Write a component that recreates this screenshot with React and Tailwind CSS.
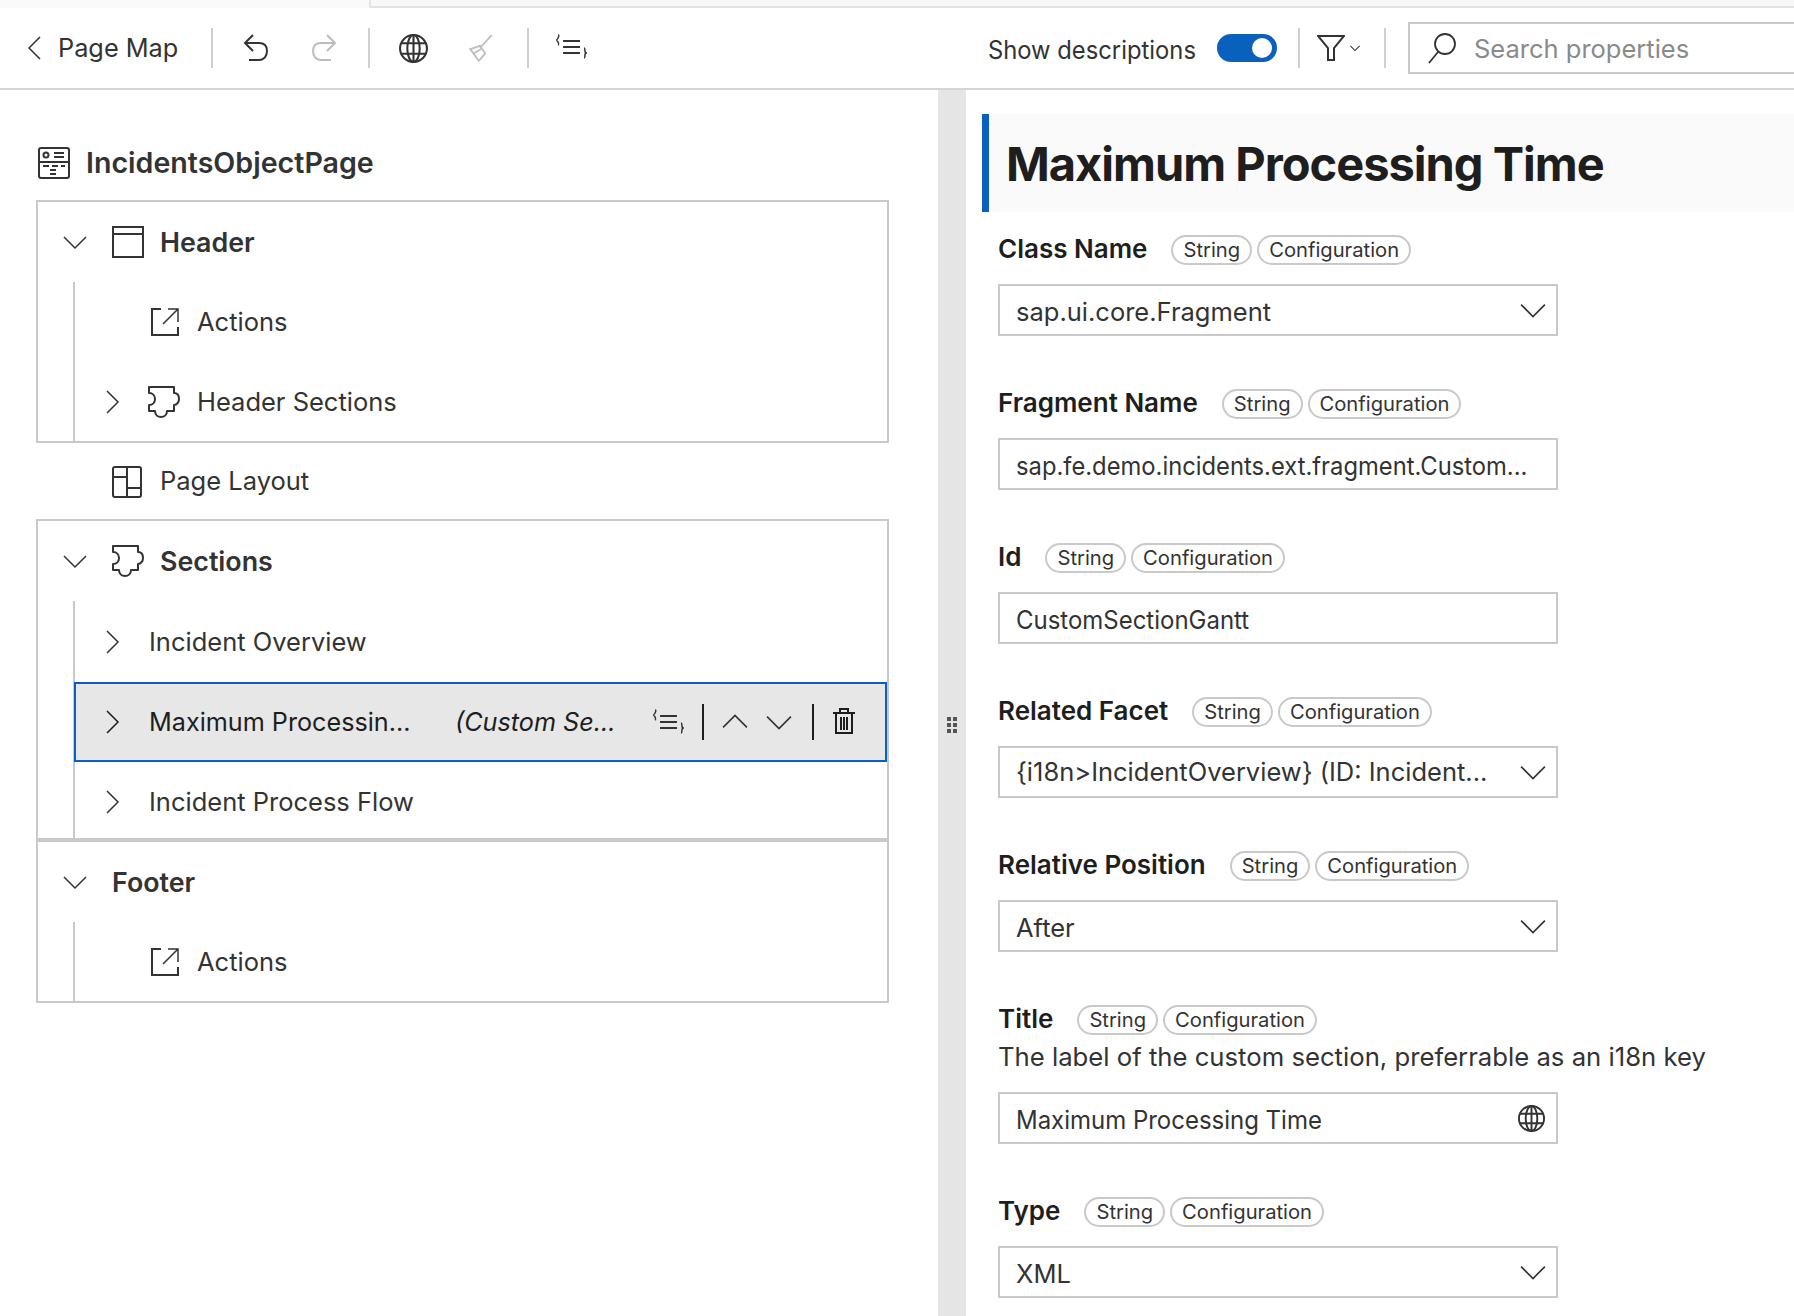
import React from "react";

const Chev = ({ d = "down", size = 24, w = 1.5, color = "#333" }) => {
  const p = { down: "M1 7l11 11 11-11", right: "M7 1l11 11L7 23", up: "M1 17L12 6l11 11", left: "M17 1L6 12l11 11" }[d];
  return (
    <svg width={size} height={size} viewBox="0 0 24 24" fill="none" stroke={color} strokeWidth={w} className="shrink-0">
      <path d={p} />
    </svg>
  );
};

const Puzzle = () => (
  <svg width="34" height="34" viewBox="0 0 34 34" fill="none" stroke="#333" strokeWidth="2" strokeLinejoin="round" className="shrink-0 block">
    <path d="M2 2H27V8C31 8 32 11 32 14C32 17 30 20 27 20V26H20C20 30 17 32 14 32C11 32 8 30 8 26H2V20C6 20 8 17 8 14C8 11 6 8 2 8Z" />
  </svg>
);

const Ext = () => (
  <svg width="30" height="30" viewBox="0 0 30 30" fill="none" stroke="#333" strokeWidth="2" className="shrink-0 block">
    <path d="M11 2H2v26h26v-8" />
    <path d="M18 2h10v13M28 2L13 17" strokeWidth="1.5" />
  </svg>
);

const Globe = ({ size = 30 }) => (
  <svg width={size} height={size} viewBox="0 0 30 30" fill="none" stroke="#333" strokeWidth="2" className="shrink-0">
    <circle cx="15" cy="15" r="13" />
    <ellipse cx="15" cy="15" rx="6" ry="13" />
    <path d="M15 2v26M3 10h24M3 20h24" />
  </svg>
);

const Outline = ({ size = 34 }) => (
  <svg width={size} height={size * 0.82} viewBox="0 0 34 28" fill="none" stroke="#333" strokeWidth="2" className="shrink-0">
    <path d="M2 1c1 0 1 1 0 3C1 6 1 6 0 6c1 0 1 1 2 2 1 2 0 3 1 3" strokeWidth="1.5" transform="translate(1 1)" />
    <path d="M8 8h17M8 14h17M8 20h17" />
    <path d="M29 15c1 0 1 2 1 3s1 2 2 2c-1 0-2 1-2 2s0 3-1 3" strokeWidth="1.5" />
  </svg>
);

const Pill = ({ children }) => (
  <span className="h-[30px] flex items-center px-[10px] rounded-[15px] border-2 border-[#c9c9c9] text-[20.2px] text-[#333] leading-none">
    {children}
  </span>
);

const Field = ({ label, value, select, globe, desc, narrow, narrower, flat }) => (
  <div className="mb-[52px]">
    <div className="flex items-center gap-[5px] h-[32px]">
      <span className="text-[26px] font-semibold text-[#1e1e1e] mr-[19px] pb-[3px]">{label}</span>
      <Pill>String</Pill>
      <Pill>Configuration</Pill>
    </div>
    {desc && <div className="text-[25.7px] text-[#333] leading-[32px] mt-[5px] whitespace-nowrap">{desc}</div>}
    <div className={`w-[560px] h-[52px] border-2 border-[#c9c9c9] flex items-center justify-between pl-[16px] pr-[10px] bg-white ${desc ? "mt-[19px]" : "mt-[18px]"}`}>
      <span className={`text-[25.5px] text-[#333] whitespace-nowrap ${flat ? "" : "pt-[4px]"} ${narrow ? "inline-block scale-x-[0.94] origin-left" : ""} ${narrower ? "inline-block scale-x-[0.932] origin-left" : ""}`}>{value}</span>
      {select && <Chev d="down" size={26} />}
      {globe && <Globe size={29} />}
    </div>
  </div>
);

const Row = ({ indent, chev, icon, bold, children }) => (
  <div className="h-[80px] flex items-center">
    <div className="w-[37px] shrink-0 flex justify-center" style={{ marginLeft: indent }}>
      {chev && <Chev d={chev} />}
    </div>
    {icon}
    <span className={`whitespace-nowrap text-[#333] ${bold ? "text-[26.8px] font-semibold" : "text-[25.5px]"}`}>{children}</span>
  </div>
);

export default function App() {
  return (
    <div className="w-[1794px] h-[1316px] overflow-hidden bg-white flex flex-col font-['Inter',sans-serif] text-[#333]">
      {/* top strip */}
      <div className="h-[8px] flex shrink-0">
        <div className="w-[371px] bg-[#fafafa] border-r-2 border-[#e5e5e5]" />
        <div className="flex-1 bg-[#f7f7f7] border-b-2 border-[#e2e2e2]" />
      </div>

      {/* toolbar */}
      <div className="h-[82px] shrink-0 border-b-2 border-[#d4d4d4] flex items-center relative">
        <div className="flex items-center w-[211px] pl-[23px]">
          <Chev d="left" size={24} />
          <span className="text-[25.3px] ml-[11px] whitespace-nowrap">Page Map</span>
        </div>
        <div className="w-[2px] h-[40px] bg-[#d0d0d0]" />
        <div className="w-[155px] flex items-center justify-between pl-[30px] pr-[31px]">
          <svg width="26" height="28" viewBox="0 0 26 28" fill="none" stroke="#333" strokeWidth="2"><path d="M10 1L2 9l8 8M2 9h14c5 0 8 3 8 8s-3 9-8 9H6" /></svg>
          <svg width="26" height="28" viewBox="0 0 26 28" fill="none" stroke="#bdbdbd" strokeWidth="2"><path d="M16 1l8 8-8 8M24 9H10c-5 0-8 3-8 8s3 9 8 9h10" /></svg>
        </div>
        <div className="w-[2px] h-[40px] bg-[#d0d0d0]" />
        <div className="w-[157px] flex items-center justify-between pl-[28px] pr-[33px]">
          <Globe size={31} />
          <svg width="26" height="28" viewBox="0 0 24 26" fill="none" stroke="#bdbdbd" strokeWidth="1.6"><path d="M22 1L11 13M2 14l9-3 5 7-6 7-8-11zM5 18l7-4" /></svg>
        </div>
        <div className="w-[2px] h-[40px] bg-[#d0d0d0]" />
        <div className="ml-[26px] mt-[-2px]"><Outline /></div>

        <div className="ml-auto flex items-center">
          <span className="text-[25.5px] whitespace-nowrap mr-[21px] pt-[4px] inline-block scale-x-[0.933] origin-right">Show descriptions</span>
          <div className="w-[60px] h-[28px] rounded-[14px] bg-[#0a60bd] flex items-center justify-end pr-[5px] mr-[21px]">
            <div className="w-[20px] h-[20px] rounded-full bg-white" />
          </div>
          <div className="w-[2px] h-[40px] bg-[#d0d0d0]" />
          <div className="w-[84px] flex items-center pl-[17px]">
            <svg width="28" height="26" viewBox="0 0 28 26" fill="none" stroke="#333" strokeWidth="2"><path d="M1 1h26L17 13v12h-6V13z" /></svg>
            <span className="ml-[5px]"><Chev d="down" size={10} w={2.5} /></span>
          </div>
          <div className="w-[2px] h-[40px] bg-[#d0d0d0]" />
          <div className="ml-[22px] w-[386px] h-[52px] border-2 border-r-0 border-[#c9c9c9] flex items-center pl-[17px]">
            <svg width="30" height="32" viewBox="0 0 30 32" fill="none" stroke="#333" strokeWidth="1.8"><circle cx="18" cy="12" r="10" /><path d="M11 20L2 31" /></svg>
            <span className="text-[25.5px] text-[#8a8a8a] ml-[17px] pt-[2px] whitespace-nowrap">Search properties</span>
          </div>
        </div>
      </div>

      <div className="flex-1 flex min-h-0">
        {/* left panel */}
        <div className="w-[938px] shrink-0 pl-[36px] pr-[49px] pt-[44px]">
          <div className="flex items-center h-[58px] mb-[8px] pl-[2px]">
            <svg width="32" height="32" viewBox="0 0 32 32" fill="none" stroke="#333" strokeWidth="2" className="shrink-0">
              <rect x="1" y="1" width="30" height="30" rx="2" />
              <path d="M1 15h30M16 6h10M16 10h10M5 19h6M14 19h6M23 19h4M12 23h6M12 27h6" />
              <circle cx="8" cy="8" r="2.5" />
            </svg>
            <span className="text-[28.6px] font-semibold ml-[16px] whitespace-nowrap">IncidentsObjectPage</span>
          </div>

          <div className="border-2 border-[#c9c9c9] h-[243px]">
            <Row chev="down" indent={18} icon={<svg width="32" height="32" viewBox="0 0 32 32" fill="none" stroke="#333" strokeWidth="2" className="shrink-0 ml-[19px] mr-[16px]"><rect x="1" y="1" width="30" height="30" /><path d="M1 8h30" /></svg>} bold>Header</Row>
            <div className="border-l-2 border-[#c9c9c9] ml-[35px] h-[161px]">
              <Row indent={18} icon={<span className="ml-[20px] mr-[17px]"><Ext /></span>}>Actions</Row>
              <Row indent={18} chev="right" icon={<span className="ml-[17px] mr-[16px]"><Puzzle /></span>}>Header Sections</Row>
            </div>
          </div>

          <div className="h-[76px] flex items-center pl-[76px] pt-[1px]">
            <svg width="30" height="32" viewBox="0 0 30 32" fill="none" stroke="#333" strokeWidth="2" className="shrink-0 mr-[18px]"><rect x="1" y="1" width="28" height="30" rx="2" /><path d="M15 1v30M1 11h14M15 22h14" /></svg>
            <span className="text-[25.5px] whitespace-nowrap">Page Layout</span>
          </div>

          <div className="border-2 border-[#c9c9c9] border-b-0 h-[321px]">
            <Row chev="down" indent={18} icon={<span className="ml-[18px] mr-[15px]"><Puzzle /></span>} bold>Sections</Row>
            <div className="ml-[35px] border-l-2 border-[#c9c9c9] h-[239px] relative pt-[1px]">
              <Row indent={18} chev="right" icon={<span className="ml-[19px]" />}>Incident Overview</Row>
              <div className="h-[80px] -ml-[1px] border-2 border-[#0a60bd] bg-[#e7e7e7] flex items-center text-[#1e1e1e] relative">
                <div className="w-[37px] ml-[17px] shrink-0 flex justify-center"><Chev d="right" color="#1e1e1e" /></div>
                <span className="text-[25.2px] ml-[19px] w-[306px] pt-[2px] whitespace-nowrap">Maximum Processin...</span>
                <span className="text-[25.2px] italic w-[197px] pt-[2px] whitespace-nowrap">(Custom Se...</span>
                <Outline size={34} />
                <div className="w-[2px] h-[36px] bg-[#1e1e1e] ml-[16px]" />
                <span className="ml-[18px]"><Chev d="up" size={26} /></span>
                <span className="ml-[18px]"><Chev d="down" size={26} /></span>
                <div className="w-[2px] h-[36px] bg-[#1e1e1e] ml-[20px]" />
                <svg width="22" height="28" viewBox="0 0 22 28" fill="none" stroke="#1e1e1e" strokeWidth="2" className="ml-[19px] mb-[2px]"><path d="M0 6h22M7 6V2h8v4M3 6v20h16V6M8 10v13M11 10v13M14 10v13" /></svg>
              </div>
              <Row indent={18} chev="right" icon={<span className="ml-[19px]" />}>Incident Process Flow</Row>
            </div>
          </div>

          <div className="border-2 border-t-4 border-[#c9c9c9] h-[165px] mt-[-2px]">
            <Row chev="down" indent={18} icon={<span className="ml-[19px]" />} bold>Footer</Row>
            <div className="border-l-2 border-[#c9c9c9] ml-[35px] h-[79px]">
              <Row indent={18} icon={<span className="ml-[20px] mr-[17px]"><Ext /></span>}>Actions</Row>
            </div>
          </div>
        </div>

        {/* splitter */}
        <div className="w-[28px] shrink-0 bg-[#e5e5e5] flex items-center justify-center">
          <svg width="12" height="18" viewBox="0 0 12 18" fill="#555" className="mt-[44px]">
            <rect x="1" y="1" width="4" height="4" /><rect x="7" y="1" width="4" height="4" />
            <rect x="1" y="7" width="4" height="4" /><rect x="7" y="7" width="4" height="4" />
            <rect x="1" y="13" width="4" height="4" /><rect x="7" y="13" width="4" height="4" />
          </svg>
        </div>

        {/* right panel */}
        <div className="flex-1 min-w-0 pt-[24px] pl-[16px]">
          <div className="h-[98px] bg-[#fafafa] border-l-[7px] border-[#0a60bd] flex items-center pl-[17px] pt-[2px] mb-[22px]">
            <span className="text-[47px] font-bold text-[#1e1e1e] whitespace-nowrap tracking-[-1px]">Maximum Processing Time</span>
          </div>
          <div className="pl-[16px]">
            <Field label="Class Name" value="sap.ui.core.Fragment" select />
            <Field label="Fragment Name" value="sap.fe.demo.incidents.ext.fragment.Custom..." narrower />
            <Field label="Id" value="CustomSectionGantt" narrow />
            <Field label="Related Facet" value="{i18n>IncidentOverview} (ID: Incident..." select flat />
            <Field label="Relative Position" value="After" select />
            <Field label="Title" value="Maximum Processing Time" globe narrow desc="The label of the custom section, preferrable as an i18n key" />
            <Field label="Type" value="XML" select />
          </div>
        </div>
      </div>
    </div>
  );
}
